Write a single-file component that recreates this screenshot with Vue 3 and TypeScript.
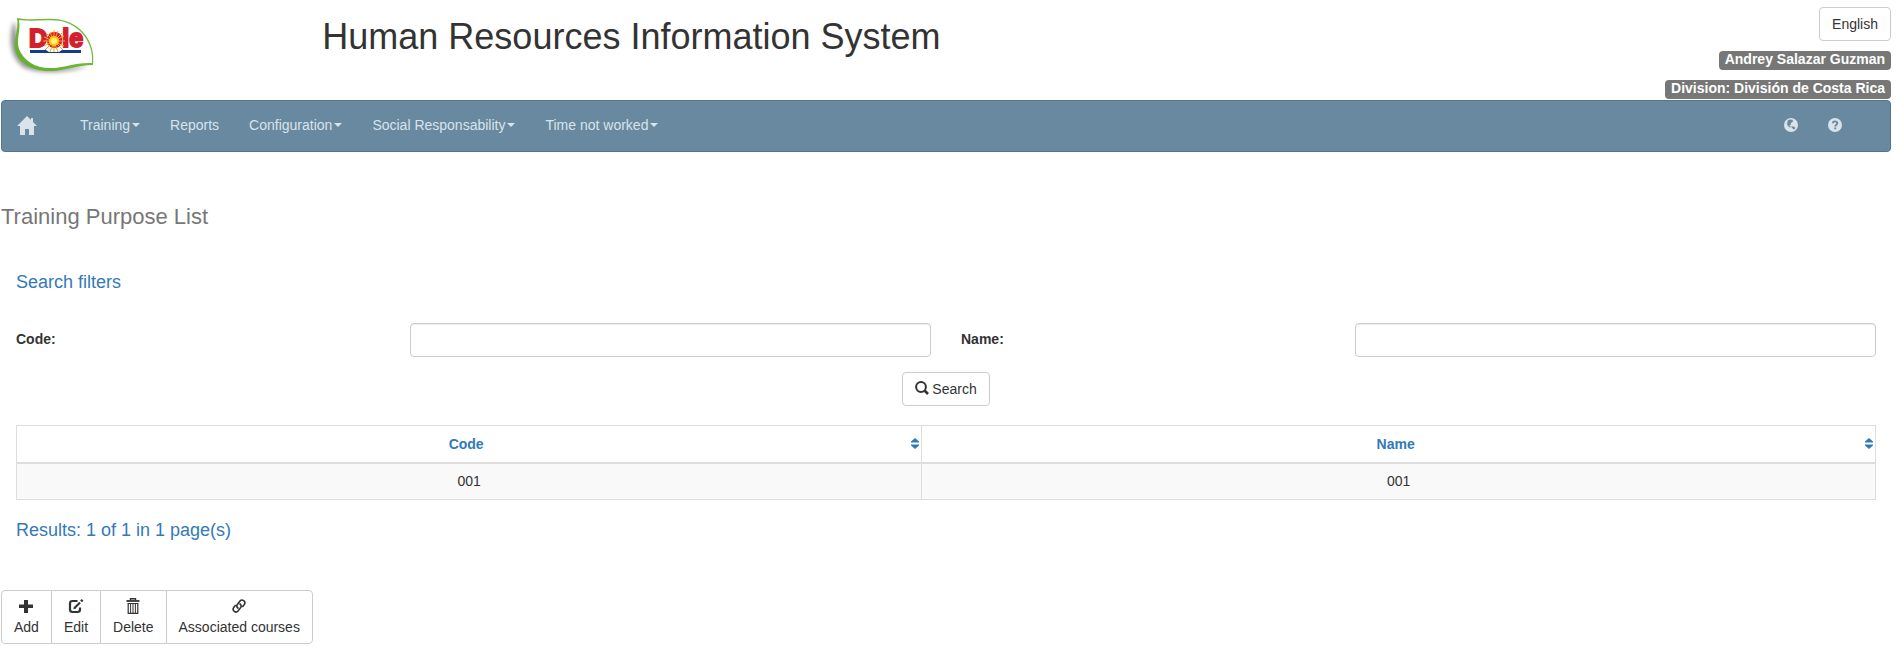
<script setup lang="ts">
import { ref } from 'vue'

interface MenuItem {
  label: string
  dropdown: boolean
}

interface Purpose {
  code: string
  name: string
}

const menu: MenuItem[] = [
  { label: 'Training', dropdown: true },
  { label: 'Reports', dropdown: false },
  { label: 'Configuration', dropdown: true },
  { label: 'Social Responsability', dropdown: true },
  { label: 'Time not worked', dropdown: true },
]

const columns = ['Code', 'Name']
const rows: Purpose[] = [{ code: '001', name: '001' }]
const actions = ['Add', 'Edit', 'Delete', 'Associated courses']

const code = ref('')
const name = ref('')
</script>

<template>
  <div class="page">
    <header class="header">
      <a href="#" class="logo" aria-label="Dole">
        <svg width="100" height="80" viewBox="0 0 100 80">
          <defs>
            <filter id="soft" x="-20%" y="-20%" width="140%" height="140%">
              <feGaussianBlur stdDeviation="2" />
            </filter>
            <linearGradient id="leaf" x1="0" y1="1" x2="1" y2="0">
              <stop offset="0" stop-color="#5fae2a" />
              <stop offset="1" stop-color="#7cc243" />
            </linearGradient>
          </defs>
          <path d="M13 21C7 38 9 59 24 68C42 75 68 72 88 66C66 68 42 67 30 62C18 52 18 38 13 21Z" fill="#666" opacity=".7" filter="url(#soft)" />
          <path d="M16 18C30 21 46 17 61 20C80 24 95 42 92 65C76 65 64 71 49 71C32 71 18 64 14 50C12 40 18 29 16 18Z" fill="url(#leaf)" />
          <path d="M18 20C32 22 46 19 60 21C79 25 93 43 91 63C75 62 64 68 49 68C34 68 23 61 18 49C15 40 20 30 18 20Z" fill="#fff" />
          <text x="28" y="47" font-family="Liberation Sans, sans-serif" font-weight="bold" font-size="25" fill="#d2202f" stroke="#d2202f" stroke-width="2">Dole</text>
          <g stroke="#f5a81c" stroke-width="1">
            <path d="M53 30V53M42 41H64M45 33L62 50M61 33L44 50M49 32L57 52M57 31L49 52M43 37L63 46M63 36L43 46" />
          </g>
          <circle cx="53" cy="41" r="5" fill="#fbc913" />
          <circle cx="53" cy="41" r="3" fill="#fff36d" />
          <path d="M29 50H45L48 52H58L61 50H80V53H29Z" fill="#153c8c" />
        </svg>
      </a>
      <h1 class="title">Human Resources Information System</h1>
      <div class="session">
        <button type="button" class="btn">English</button>
        <span class="badge">Andrey Salazar Guzman</span>
        <span class="badge">Division: División de Costa Rica</span>
      </div>
    </header>

    <nav class="navbar">
      <a href="#" class="home" aria-label="Home">
        <svg width="20" height="19" viewBox="0 0 20 19" fill="currentColor">
          <path d="M10 0L14 4V2H16V6L20 10H17V19H12V13H8V19H3V10H0Z" />
        </svg>
      </a>
      <ul class="menu">
        <li v-for="item in menu" :key="item.label">
          <a href="#">{{ item.label }}<b v-if="item.dropdown" class="caret"></b></a>
        </li>
      </ul>
      <div class="tools">
        <a href="#" aria-label="Language">
          <svg width="14" height="14" viewBox="0 0 14 14">
            <circle cx="7" cy="7" r="7" fill="currentColor" />
            <path d="M4 2L6 1.500L9.500 2L8 3L9.500 3.500L7.500 4.500L6.500 6L7 7L5 7.500L7 9L6 9.500L4 8L3 6L3.500 4Z" fill="#6889a0" />
            <path d="M7 8.500H10L11.500 10L10 11.500L8.500 10.500Z" fill="#6889a0" />
          </svg>
        </a>
        <a href="#" aria-label="Help">
          <svg width="14" height="14" viewBox="0 0 14 14">
            <circle cx="7" cy="7" r="7" fill="currentColor" />
            <path d="M4.800 5.300C4.800 2.700 9.300 2.700 9.300 5.200C9.300 6.700 7.200 6.700 7.200 8.500" fill="none" stroke="#6889a0" stroke-width="1.900" />
            <path d="M6.200 9.500H8.200V11.300H6.200Z" fill="#6889a0" />
          </svg>
        </a>
      </div>
    </nav>

    <main>
      <h2 class="heading">Training Purpose List</h2>

      <section class="panel">
        <h3 class="subheading">Search filters</h3>
        <form @submit.prevent>
          <div class="filters">
            <label for="code">Code:</label>
            <div class="field"><input id="code" v-model="code" type="text" /></div>
            <label for="name">Name:</label>
            <div class="field"><input id="name" v-model="name" type="text" /></div>
          </div>
          <div class="submit">
            <button type="submit" class="btn">
              <svg width="14" height="16" viewBox="0 0 14 16" fill="none" stroke="currentColor">
                <circle cx="6" cy="6" r="4.900" stroke-width="2" />
                <path d="M9.500 9.500L13 13" stroke-width="2.600" />
              </svg>
              <span>Search</span>
            </button>
          </div>
        </form>

        <table class="grid">
          <thead>
            <tr>
              <th v-for="column in columns" :key="column" scope="col">
                <a href="#" class="sort">
                  <span>{{ column }}</span>
                  <svg width="8" height="11" viewBox="0 0 8 11" fill="currentColor">
                    <path d="M4 0L8 3.500V4.500H0V3.500ZM0 6.500H8V7.500L4 11L0 7.500Z" />
                  </svg>
                </a>
              </th>
            </tr>
          </thead>
          <tbody>
            <tr v-for="row in rows" :key="row.code">
              <td>{{ row.code }}</td>
              <td>{{ row.name }}</td>
            </tr>
          </tbody>
        </table>
        <p class="results">Results: 1 of 1 in 1 page(s)</p>
      </section>

      <div class="actions">
        <button v-for="action in actions" :key="action" type="button">
          <svg v-if="action === 'Add'" width="14" height="16" viewBox="0 0 14 16" fill="currentColor">
            <path d="M5 2H9V6.500H14V10H9V15H5V10H0V6.500H5Z" />
          </svg>
          <svg v-else-if="action === 'Edit'" width="16" height="16" viewBox="0 0 16 16" fill="none" stroke="currentColor">
            <path d="M9.500 3H4.500Q2 3 2 5.500V11.500Q2 14 4.500 14H9.500Q12 14 12 11.500V9.500" stroke-width="2.200" />
            <path d="M6.500 10L12 4.500" stroke-width="2.200" />
            <path d="M5.300 11.300L6 8.500L8 10.500Z" fill="currentColor" stroke="none" />
            <path d="M13 3.400L14.600 1.800" stroke-width="2.400" />
          </svg>
          <svg v-else-if="action === 'Delete'" width="14" height="16" viewBox="0 0 14 16" fill="none" stroke="currentColor">
            <path d="M4.500 2.500V0.700H9.500V2.500" stroke-width="1.400" />
            <path d="M0.500 3H13.500" stroke-width="1.800" />
            <path d="M2.200 5V15.300H11.800V5M1.500 5.500H12.500" stroke-width="1.200" />
            <path d="M4.600 5V15M7 5V15M9.400 5V15" stroke-width="1" />
          </svg>
          <svg v-else width="14" height="16" viewBox="0 0 14 16" fill="none" stroke="currentColor" stroke-width="1.600">
            <path d="M6.500 10.500Q4 9 5.200 6.700L8 3Q9.600 1.200 11.700 2.600Q13.800 4.300 12.300 6.500L10.300 9" />
            <path d="M7.500 5.500Q10 7 8.800 9.400L6 13Q4.400 14.900 2.300 13.400Q0.200 11.700 1.700 9.500L3.700 7" />
          </svg>
          <span>{{ action }}</span>
        </button>
      </div>
    </main>
  </div>
</template>

<style>
body {
  margin: 0;
  background: #fff;
}
</style>

<style scoped>
.page,
.page * {
  box-sizing: border-box;
}

.page {
  padding: 0 13px 0 1px;
  font-family: "Liberation Sans", Arial, sans-serif;
  font-size: 14px;
  line-height: 20px;
  color: #333;
}

svg {
  display: block;
  flex: none;
}

a {
  color: inherit;
  text-decoration: none;
}

.header {
  display: grid;
  grid-template-columns: 17fr 66fr 17fr;
  height: 100px;
}

.title {
  margin: 17px 0 0;
  font-size: 36px;
  font-weight: 400;
  line-height: 40px;
  white-space: nowrap;
}

.session {
  display: flex;
  flex-direction: column;
  align-items: flex-end;
  gap: 10px;
  padding-top: 7px;
}

.btn {
  display: inline-flex;
  align-items: center;
  gap: 3px;
  height: 34px;
  padding: 0 12px 1px;
  border: 1px solid #ccc;
  border-radius: 4px;
  background: #fff;
  color: #333;
  font: inherit;
}

.badge {
  padding: 0 6px 2px;
  border-radius: 4px;
  background: #777;
  color: #fff;
  font-weight: 700;
  line-height: 17px;
  white-space: nowrap;
}

.navbar {
  display: flex;
  align-items: center;
  height: 52px;
  padding: 0 33px 2px 15px;
  border: 1px solid #54748b;
  border-radius: 4px;
  background: #6889a0;
  color: #d9e3ea;
}

.home {
  margin-right: 28px;
}

.menu {
  display: flex;
  flex: 1;
  margin: 0;
  padding: 0;
  list-style: none;
}

.menu a {
  display: flex;
  align-items: center;
  gap: 2px;
  padding: 0 15px;
  white-space: nowrap;
}

.caret {
  border-top: 4px solid currentColor;
  border-right: 4px solid transparent;
  border-left: 4px solid transparent;
}

.tools {
  display: flex;
}

.tools a {
  padding: 0 15px;
}

.heading {
  margin: 51px 0 0;
  color: #777;
  font-size: 22px;
  font-weight: 400;
  line-height: 28px;
}

.panel {
  padding: 0 15px;
}

.subheading,
.results {
  margin: 0;
  color: #337ab7;
  font-size: 18px;
  font-weight: 400;
  line-height: 20px;
}

.subheading {
  margin-top: 41px;
}

.filters {
  display: grid;
  grid-template-columns: 5fr 7fr 5fr 7fr;
  margin: 31px -15px 0;
}

.filters label {
  padding: 6px 15px;
  font-weight: 700;
}

.field {
  padding: 0 15px;
}

.field input {
  display: block;
  width: 100%;
  height: 34px;
  padding: 6px 12px;
  border: 1px solid #ccc;
  border-radius: 4px;
  background: #fff;
  box-shadow: inset 0 1px 1px rgba(0, 0, 0, 0.075);
  color: #555;
  font: inherit;
}

.submit {
  display: flex;
  justify-content: center;
  margin-top: 15px;
}

.grid {
  width: 100%;
  margin-top: 19px;
  border: 1px solid #ddd;
  border-collapse: collapse;
  table-layout: fixed;
  text-align: center;
}

.grid th,
.grid td {
  height: 37px;
  padding: 0;
  border: 1px solid #ddd;
}

.grid th {
  padding-right: 2px;
  border-bottom-width: 2px;
  color: #337ab7;
}

.grid th:first-child {
  width: 48.7%;
}

.grid tbody tr {
  background: #f9f9f9;
}

.sort {
  display: flex;
  align-items: center;
}

.sort span {
  flex: 1;
  padding-left: 4px;
}

.results {
  margin-top: 20px;
}

.actions {
  display: flex;
  margin-top: 50px;
}

.actions button {
  display: flex;
  flex-direction: column;
  align-items: center;
  gap: 3px;
  margin-left: -1px;
  padding: 7px 12px 6px;
  border: 1px solid #ccc;
  background: #fff;
  color: #333;
  font: inherit;
}

.actions button:first-child {
  margin-left: 0;
  border-radius: 4px 0 0 4px;
}

.actions button:last-child {
  border-radius: 0 4px 4px 0;
}
</style>
